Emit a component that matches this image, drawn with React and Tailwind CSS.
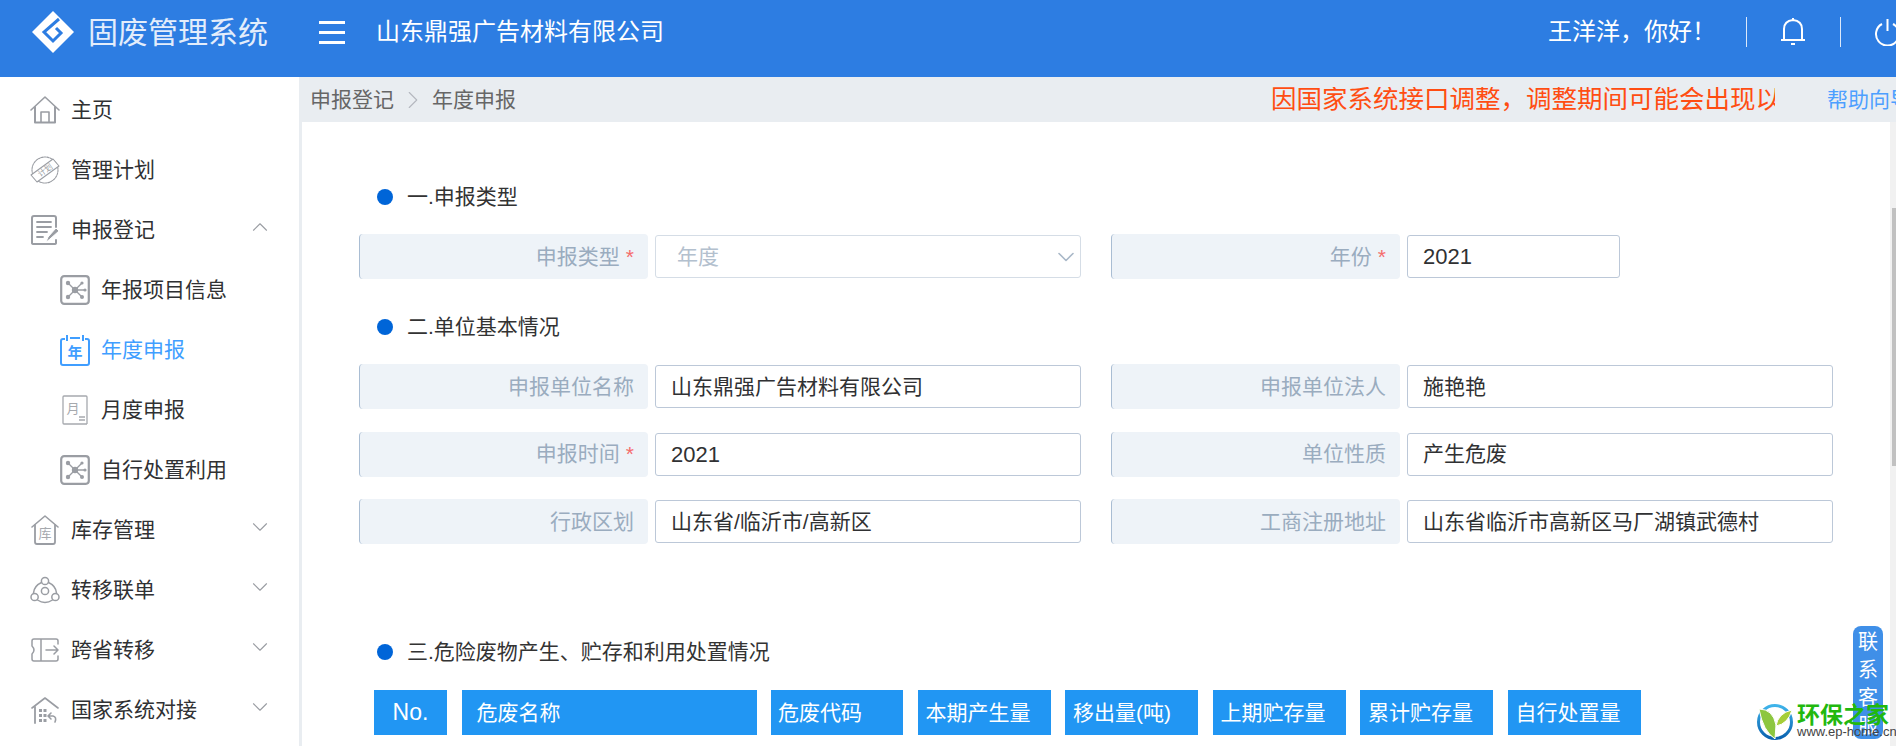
import React from 'react';
import { ChevronDown, ChevronUp, ChevronRight } from 'lucide-react';

const FONT = '[font-family:"Liberation_Sans","Noto_Sans_CJK_SC",sans-serif]';

// Sidebar icons, drawn to match the screenshot
const stroke = { fill: 'none', stroke: '#9a9da3', strokeWidth: 1.6, strokeLinecap: 'round', strokeLinejoin: 'round' };

const HomeIcon = () => (
  <svg width="30" height="28" viewBox="0 0 30 28" {...stroke}>
    <path d="M1 14 15 1l14 13" />
    <path d="M5 11v15.5h20V11" strokeWidth="2" />
    <path d="M11 26V16h8v10" />
  </svg>
);

const PlanIcon = () => (
  <svg width="30" height="28" viewBox="0 0 30 28" {...stroke} strokeWidth="1.1">
    <circle cx="15" cy="14" r="13" strokeDasharray="2 1" />
    <path d="M1 19 23 3l6 7L7 26z" fill="#fff" />
    <text x="15" y="17" fontSize="8" textAnchor="middle" fill="#9a9da3" stroke="none" transform="rotate(-35 15 14)">计划</text>
  </svg>
);

const ReportIcon = () => (
  <svg width="28" height="30" viewBox="0 0 28 30" {...stroke}>
    <path d="M25 12V3q0-2-2-2H3Q1 1 1 3v25q0 1 2 1h20q2 0 2-1v-3" strokeWidth="2" />
    <path d="M6 7h14M6 12h14M6 17h10M6 22h6" strokeWidth="1.8" />
    <path d="M15 27l2-5 8-9 3 3-9 8z" fill="#9a9da3" stroke="#fff" strokeWidth="1" />
  </svg>
);

const NetworkIcon = () => (
  <svg width="30" height="30" viewBox="0 0 30 30" fill="none" stroke="#9a9da3">
    <rect x="1.2" y="1.2" width="27.6" height="27.6" rx="3" strokeWidth="2.2" />
    <path d="M8 8l14 14M22 8 8 22M15 15h10" strokeWidth="1.4" />
    <g fill="#9a9da3" stroke="none">
      <circle cx="15" cy="15" r="3.2" />
      <circle cx="8" cy="8" r="2.2" />
      <circle cx="22" cy="8" r="1.6" />
      <circle cx="8" cy="22" r="2.2" />
      <circle cx="22" cy="22" r="2" />
      <circle cx="25" cy="15" r="1.6" />
    </g>
  </svg>
);

const YearIcon = () => (
  <svg width="30" height="31" viewBox="0 0 30 31" fill="none" stroke="#409eff" strokeWidth="2">
    <path d="M5 4H3Q1 4 1 6v22q0 2 2 2h24q2 0 2-2V6q0-2-2-2h-2M10 3h10M7 0v6M23 0v6" />
    <text x="15" y="23" fontSize="15" fontWeight="700" textAnchor="middle" fill="#409eff" stroke="none">年</text>
  </svg>
);

const MonthIcon = () => (
  <svg width="26" height="30" viewBox="0 0 26 30" fill="none" stroke="#a6a9ae" strokeWidth="1.3">
    <path d="M25 29H2q-1 0-1-1V2q0-1 1-1h22q1 0 1 1v27" />
    <text x="11" y="18" fontSize="13" textAnchor="middle" fill="#a6a9ae" stroke="none">月</text>
    <path d="M17 22h6M17 25h6" />
  </svg>
);

const StoreIcon = () => (
  <svg width="28" height="30" viewBox="0 0 28 30" {...stroke}>
    <path d="M1 12 14 1l13 11" />
    <path d="M4 10v17q0 2 2 2h16q2 0 2-2V10" strokeWidth="1.8" />
    <text x="14" y="23" fontSize="13" textAnchor="middle" fill="#a6a9ae" stroke="none">库</text>
  </svg>
);

const TransferIcon = () => (
  <svg width="30" height="29" viewBox="0 0 30 29" {...stroke} strokeWidth="1.5">
    <circle cx="15" cy="5" r="3.6" />
    <circle cx="4.6" cy="21" r="3.6" />
    <circle cx="25.4" cy="21" r="3.6" />
    <circle cx="15" cy="15" r="3.6" />
    <path d="M11.5 6.5Q4 10 3.5 17M18.5 6.5Q26 10 26.5 17M7.5 24q7.5 5 15 0" />
  </svg>
);

const CrossIcon = () => (
  <svg width="28" height="24" viewBox="0 0 28 24" {...stroke} strokeWidth="1.5">
    <path d="M10 1H3Q1 1 1 3v5q4 4 0 8v5q0 2 2 2h22q2 0 2-2v-3M27 6V3q0-2-2-2H10M10 1v22" />
    <path d="M15 12h12M23 8l4 4-4 4" />
  </svg>
);

const NationIcon = () => (
  <svg width="28" height="27" viewBox="0 0 28 27" {...stroke}>
    <path d="M1 11 14 1l13 10" />
    <path d="M4 10v16" strokeWidth="1.8" />
    <g fill="#9a9da3" stroke="none">
      <rect x="8" y="12" width="3" height="3" />
      <rect x="12.5" y="12" width="3" height="3" />
      <rect x="8" y="17" width="3" height="3" />
      <rect x="12.5" y="17" width="3" height="3" />
      <rect x="8" y="22" width="3" height="3" />
      <rect x="12.5" y="22" width="3" height="3" />
    </g>
    <path d="M24 25q2-5-2-6h-4M20 16l-3 3 3 3" />
  </svg>
);

const menu = [
  { label: '主页', icon: <HomeIcon /> },
  { label: '管理计划', icon: <PlanIcon /> },
  { label: '申报登记', icon: <ReportIcon />, open: true },
  { label: '年报项目信息', icon: <NetworkIcon />, sub: true },
  { label: '年度申报', icon: <YearIcon />, sub: true, active: true },
  { label: '月度申报', icon: <MonthIcon />, sub: true },
  { label: '自行处置利用', icon: <NetworkIcon />, sub: true },
  { label: '库存管理', icon: <StoreIcon />, closed: true },
  { label: '转移联单', icon: <TransferIcon />, closed: true },
  { label: '跨省转移', icon: <CrossIcon />, closed: true },
  { label: '国家系统对接', icon: <NationIcon />, closed: true },
];

const columns = [
  { label: 'No.', className: 'w-[73px] justify-center text-[23px]' },
  { label: '危废名称', className: 'w-[295px] pl-[15px] text-[21px]' },
  { label: '危废代码', className: 'w-[132px] pl-[7px] text-[21px]' },
  { label: '本期产生量', className: 'w-[133px] pl-[8px] text-[21px]' },
  { label: '移出量(吨)', className: 'w-[133px] pl-[8px] text-[21px]' },
  { label: '上期贮存量', className: 'w-[133px] pl-[8px] text-[21px]' },
  { label: '累计贮存量', className: 'w-[133px] pl-[8px] text-[21px]' },
  { label: '自行处置量', className: 'w-[133px] pl-[8px] text-[21px]' },
];

const Field = ({ label, value, required, narrow, digits }) => (
  <div className="flex h-[45px] w-[722px] items-center">
    <div className="flex h-full w-[289px] shrink-0 items-center justify-end rounded-[4px] border-l border-l-[#a9bdd3] bg-[#eef3f8] pr-[14px] text-[21px] text-[#9aacbf]">
      {label}
      {required && <span className="ml-[6px] text-[#f56c6c]">*</span>}
    </div>
    <div className={`ml-[7px] flex h-[43px] items-center rounded-[3px] border border-[#bcc8d8] bg-white pl-[15px] text-[#303133] ${digits ? 'text-[22px]' : 'text-[21px]'} ${narrow ? 'w-[213px]' : 'w-[426px]'}`}>
      {value}
    </div>
  </div>
);

const SectionTitle = ({ text, className }) => (
  <div className={`flex h-[28px] items-center gap-[14px] pl-[18px] text-[21px] text-[#333] ${className}`}>
    <span className="h-[16px] w-[16px] rounded-full bg-[#0065d8]"></span>
    {text}
  </div>
);

const App = () => {
  return (
    <div className={`flex h-screen w-full flex-col overflow-hidden bg-white ${FONT}`}>
      {/* Top bar */}
      <header className="flex h-[77px] shrink-0 items-center bg-[#2d7de2] pb-[13px] pl-[32px] text-white">
        <svg width="42" height="42" viewBox="0 0 42 42" className="shrink-0">
          <path d="M21 0 42 21 21 42 0 21z" fill="#fff" />
          <path d="M27 8 12 21l9 9 8-8-5-5" fill="none" stroke="#2d7de2" strokeWidth="3" />
        </svg>
        <span className="ml-[14px] whitespace-nowrap text-[30px] text-[#e3edfb]">固废管理系统</span>
        <svg width="26" height="23" viewBox="0 0 26 23" fill="#fff" className="ml-[51px] shrink-0">
          <rect y="0" width="26" height="3" />
          <rect y="10" width="26" height="3" />
          <rect y="20" width="26" height="3" />
        </svg>
        <span className="ml-[31px] whitespace-nowrap text-[24px]">山东鼎强广告材料有限公司</span>
        <div className="ml-auto mr-[-5px] flex items-center">
          <span className="whitespace-nowrap text-[24px]">王洋洋，你好！</span>
          <span className="ml-[30px] h-[30px] w-px bg-[#dbe8fa]"></span>
          <svg width="26" height="28" viewBox="0 0 26 28" fill="none" stroke="#fff" strokeWidth="2" className="mb-[3px] ml-[33px]">
            <path d="M1 23h24M4 23V12q0-8 9-9 9 1 9 9v11M13 3V1M11 27h4" />
          </svg>
          <span className="ml-[34px] h-[30px] w-px bg-[#dbe8fa]"></span>
          <svg width="27" height="27" viewBox="0 0 27 27" fill="none" stroke="#fff" strokeWidth="2" className="ml-[33px]">
            <path d="M8 5a11.5 11.5 0 1 0 11 0M13.5 0v12" />
          </svg>
        </div>
      </header>

      <div className="flex min-h-0 flex-1">
        {/* Sidebar */}
        <aside className="w-[299px] shrink-0 bg-white pt-[3px] text-[21px] text-[#303133]">
          {menu.map((item) => (
            <div key={item.label} className={`flex h-[60px] items-center ${item.sub ? 'pl-[60px]' : 'pl-[30px]'} ${item.active ? 'text-[#409eff]' : ''}`}>
              <span className="flex w-[30px] shrink-0 items-center justify-center">{item.icon}</span>
              <span className="mb-[1px] ml-[11px]">{item.label}</span>
              {item.open && <ChevronUp size={26} strokeWidth={1} className="mb-[7px] ml-auto mr-[26px] text-[#9a9da3]" />}
              {item.closed && <ChevronDown size={26} strokeWidth={1} className="mb-[7px] ml-auto mr-[26px] text-[#9a9da3]" />}
            </div>
          ))}
        </aside>

        <main className="flex min-w-0 flex-1 flex-col overflow-hidden bg-[#e9edf1]">
          {/* Breadcrumb and notice */}
          <div className="flex h-[45px] shrink-0 items-center pl-[11px] text-[21px] text-[#666]">
            <span className="whitespace-nowrap">申报登记</span>
            <ChevronRight size={30} strokeWidth={0.9} className="ml-[4px] mr-[4px] shrink-0 text-[#b4b8bf]" />
            <span className="whitespace-nowrap">年度申报</span>
            <div className="ml-[755px] w-[504px] shrink-0 overflow-hidden whitespace-nowrap text-[25.5px] leading-none text-[#ff4d12]">
              因国家系统接口调整，调整期间可能会出现以下情况
            </div>
            <span className="ml-[52px] shrink-0 whitespace-nowrap text-[#4d9fff]">帮助向导</span>
          </div>

          <div className="flex min-h-0 flex-1 pl-[3px]">
            {/* Form */}
            <div className="min-w-0 flex-1 bg-white pl-[57px] pt-[61px]">
              <SectionTitle text="一.申报类型" />
              <div className="mt-[23px] flex gap-[30px]">
                <div className="flex h-[45px] w-[722px] items-center">
                  <div className="flex h-full w-[289px] shrink-0 items-center justify-end rounded-[4px] border-l border-l-[#a9bdd3] bg-[#eef3f8] pr-[14px] text-[21px] text-[#9aacbf]">
                    申报类型<span className="ml-[6px] text-[#f56c6c]">*</span>
                  </div>
                  <div className="ml-[7px] flex h-[43px] w-[426px] items-center justify-between rounded-[3px] border border-[#d5dde6] bg-white pl-[21px] text-[21px] text-[#b3c0ce]">
                    年度
                    <ChevronDown size={28} strokeWidth={1.4} className="text-[#a9b8c8]" />
                  </div>
                </div>
                <Field label="年份" value="2021" required narrow digits />
              </div>

              <SectionTitle text="二.单位基本情况" className="mt-[34px]" />
              <div className="mt-[23px] grid w-[1474px] grid-cols-2 gap-x-[30px] gap-y-[22.5px]">
                <Field label="申报单位名称" value="山东鼎强广告材料有限公司" />
                <Field label="申报单位法人" value="施艳艳" />
                <Field label="申报时间" value="2021" required digits />
                <Field label="单位性质" value="产生危废" />
                <Field label="行政区划" value="山东省/临沂市/高新区" />
                <Field label="工商注册地址" value="山东省临沂市高新区马厂湖镇武德村" />
              </div>

              <SectionTitle text="三.危险废物产生、贮存和利用处置情况" className="mt-[94px]" />
              <div className="ml-[15px] mt-[24px] flex gap-[14.5px]">
                {columns.map((col) => (
                  <div key={col.label} className={`flex h-[45px] shrink-0 items-center whitespace-nowrap bg-[#2196f3] text-white ${col.className}`}>
                    {col.label}
                  </div>
                ))}
              </div>
            </div>

            {/* Scrollbar */}
            <div className="w-[6px] shrink-0 bg-[#f1f1f1] pl-[2px] pt-[86px]">
              <div className="h-[258px] bg-[#c1c1c1]"></div>
            </div>
          </div>
        </main>
      </div>

      {/* Floating contact tab */}
      <div className="absolute left-[1853px] top-[626px] flex h-[113px] w-[30px] flex-col items-center rounded-[8px] bg-[#3f8fe8] pt-[2px] text-[20px] leading-[28px] text-white">
        <span>联</span>
        <span>系</span>
        <span>客</span>
        <span>服</span>
      </div>

      {/* Watermark */}
      <div className="absolute left-[1756px] top-[703px] flex items-start">
        <svg width="38" height="38" viewBox="0 0 38 38">
          <defs>
            <linearGradient id="ring" x1="0" y1="0" x2="0" y2="1">
              <stop offset="0" stopColor="#3fb4ea" />
              <stop offset="1" stopColor="#0a62b0" />
            </linearGradient>
          </defs>
          <circle cx="19" cy="19" r="16.5" fill="none" stroke="url(#ring)" strokeWidth="3" />
          <path d="M3 6q14 0 17 16l-1 14Q7 28 3 6z" fill="#8cc63f" stroke="#fff" strokeWidth="1" />
          <path d="M36 7q-14 3-16 16 12-2 16-16z" fill="#a6ce39" stroke="#fff" strokeWidth="1" />
        </svg>
        <div className="ml-[3px] flex flex-col">
          <span className="whitespace-nowrap text-[23px] font-bold leading-[24px] text-[#22b80e]">环保之家</span>
          <span className="whitespace-nowrap text-[13px] font-medium leading-[10px] text-[#444]">www.ep-home.cn</span>
        </div>
      </div>
    </div>
  );
};

export default App;
